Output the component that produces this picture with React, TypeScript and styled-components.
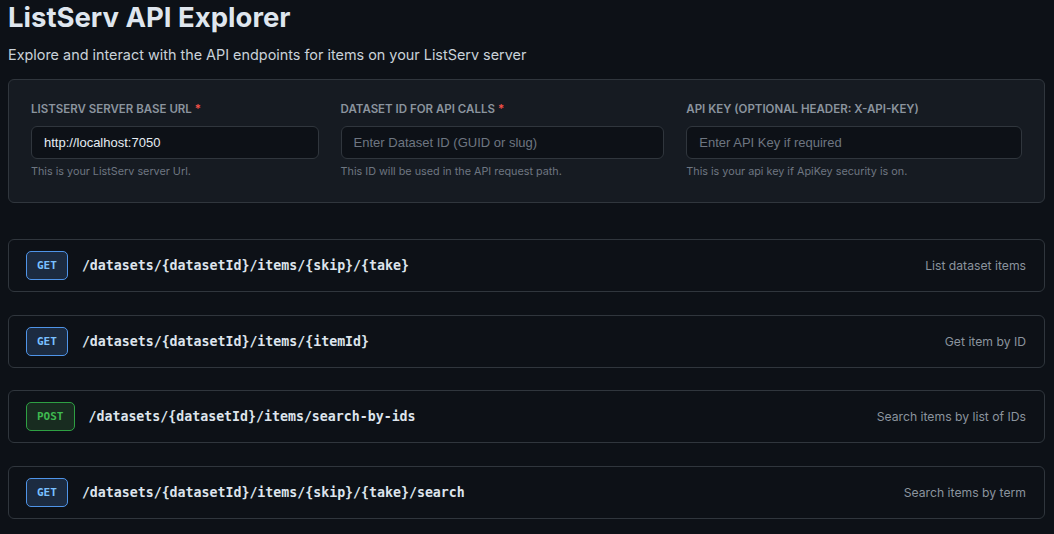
import React from 'react'
import styled, { createGlobalStyle } from 'styled-components'

// ListServ API Explorer page

const GlobalStyle = createGlobalStyle`
    html, body {
        margin: 0;
        background: #0d1117;
        color: #e6edf3;
        font-family: Inter, 'Noto Sans', sans-serif;
    }
`

const Page = styled.div`
    padding: 0 9px 0 8px;
`
const Title = styled.h1`
    margin: 0;
    font-size: 27.5px;
    line-height: 34px;
    font-weight: 700;
    color: #dfe6ee;
`
const Subtitle = styled.p`
    margin: 10px 0 0;
    font-size: 14.4px;
    line-height: 22px;
    color: #c9d1d9;
`
const ConfigCard = styled.section`
    margin-top: 13px;
    background: #161b22;
    border: 1px solid #30363d;
    border-radius: 6px;
    padding: 21px 22px 23px;
    display: grid;
    grid-template-columns: 287fr 323fr 335fr;
    column-gap: 22px;
`
const Field = styled.div`
    display: flex;
    flex-direction: column;
`
const Label = styled.label`
    font-size: 11.5px;
    line-height: 16px;
    font-weight: 600;
    text-transform: uppercase;
    color: #8b949e;
`
const Required = styled.span`
    color: #f85149;
    margin-left: 3px;
`
const Input = styled.input`
    margin-top: 9px;
    height: 33px;
    box-sizing: border-box;
    background: #0d1117;
    border: 1px solid #30363d;
    border-radius: 6px;
    padding: 0 12px;
    font-family: 'Liberation Sans', Arial, sans-serif;
    font-size: 13px;
    color: #e6edf3;
    &::placeholder {
        color: #6e7681;
    }
    &:focus {
        outline: none;
    }
`
const Help = styled.span`
    margin-top: 6px;
    font-size: 10.8px;
    line-height: 14px;
    color: #6e7681;
`
const EndpointList = styled.div`
    margin-top: 36px;
    display: flex;
    flex-direction: column;
    gap: 22.6px;
`
const Endpoint = styled.div`
    height: 53px;
    box-sizing: border-box;
    display: flex;
    align-items: center;
    padding: 0 18px 0 17px;
    border: 1px solid #30363d;
    border-radius: 6px;
    background: #0d1117;
`
const Method = styled.span<{ $kind: 'GET' | 'POST' }>`
    display: inline-flex;
    align-items: center;
    justify-content: center;
    box-sizing: border-box;
    height: 29px;
    padding: 0 10px;
    border-radius: 5px;
    font-family: 'DejaVu Sans Mono', monospace;
    font-size: 11px;
    font-weight: 700;
    border: 1px solid ${p => (p.$kind === 'GET' ? '#4f94e8' : '#2ea043')};
    background: ${p => (p.$kind === 'GET' ? '#1c2b40' : '#182c20')};
    color: ${p => (p.$kind === 'GET' ? '#79c0ff' : '#3fb950')};
`
const Path = styled.code`
    margin-left: 14px;
    font-family: 'DejaVu Sans Mono', monospace;
    font-size: 13.25px;
    font-weight: 700;
    color: #dde4ec;
`
const Description = styled.span`
    margin-left: auto;
    font-size: 12.2px;
    color: #8b949e;
`

const endpoints: { method: 'GET' | 'POST'; path: string; desc: string }[] = [
    { method: 'GET', path: '/datasets/{datasetId}/items/{skip}/{take}', desc: 'List dataset items' },
    { method: 'GET', path: '/datasets/{datasetId}/items/{itemId}', desc: 'Get item by ID' },
    { method: 'POST', path: '/datasets/{datasetId}/items/search-by-ids', desc: 'Search items by list of IDs' },
    { method: 'GET', path: '/datasets/{datasetId}/items/{skip}/{take}/search', desc: 'Search items by term' },
]

export default function App() {
    return (
        <Page>
            <GlobalStyle />
            <Title>ListServ API Explorer</Title>
            <Subtitle>Explore and interact with the API endpoints for items on your ListServ server</Subtitle>
            <ConfigCard>
                <Field>
                    <Label>ListServ Server Base URL<Required>*</Required></Label>
                    <Input defaultValue={'http://localhost:7050'} />
                    <Help>This is your ListServ server Url.</Help>
                </Field>
                <Field>
                    <Label>Dataset ID for API Calls<Required>*</Required></Label>
                    <Input placeholder={'Enter Dataset ID (GUID or slug)'} />
                    <Help>This ID will be used in the API request path.</Help>
                </Field>
                <Field>
                    <Label>API Key (Optional Header: X-API-KEY)</Label>
                    <Input placeholder={'Enter API Key if required'} />
                    <Help>This is your api key if ApiKey security is on.</Help>
                </Field>
            </ConfigCard>
            <EndpointList>
                {endpoints.map(e => (
                    <Endpoint key={e.path}>
                        <Method $kind={e.method}>{e.method}</Method>
                        <Path>{e.path}</Path>
                        <Description>{e.desc}</Description>
                    </Endpoint>
                ))}
            </EndpointList>
        </Page>
    )
}
